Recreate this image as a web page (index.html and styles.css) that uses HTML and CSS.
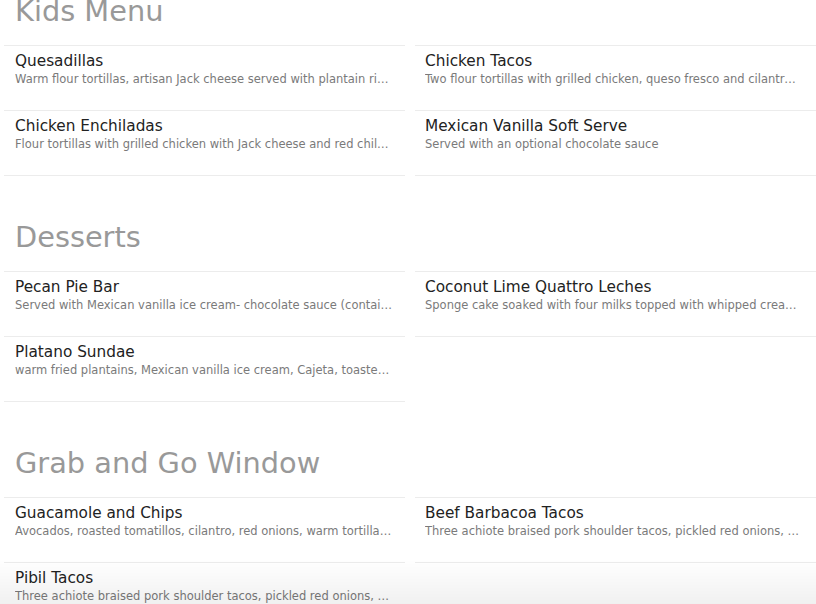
FILE: index.html
```html
<!DOCTYPE html>
<html>
<head>
<meta charset="utf-8">
<link rel="stylesheet" href="styles.css">
</head>
<body>
<div class="page">
  <section class="menu-section">
    <h2 class="section-title">Kids Menu</h2>
    <div class="items">
      <div class="item">
        <div class="item-name">Quesadillas</div>
        <div class="item-desc">Warm flour tortillas, artisan Jack cheese served with plantain rice and black beans</div>
      </div>
      <div class="item">
        <div class="item-name">Chicken Tacos</div>
        <div class="item-desc">Two flour tortillas with grilled chicken, queso fresco and cilantro, served with rice</div>
      </div>
      <div class="item">
        <div class="item-name">Chicken Enchiladas</div>
        <div class="item-desc">Flour tortillas with grilled chicken with Jack cheese and red chile sauce</div>
      </div>
      <div class="item">
        <div class="item-name">Mexican Vanilla Soft Serve</div>
        <div class="item-desc">Served with an optional chocolate sauce</div>
      </div>
    </div>
  </section>

  <section class="menu-section">
    <h2 class="section-title">Desserts</h2>
    <div class="items">
      <div class="item">
        <div class="item-name">Pecan Pie Bar</div>
        <div class="item-desc">Served with Mexican vanilla ice cream- chocolate sauce (contains nuts)</div>
      </div>
      <div class="item">
        <div class="item-name">Coconut Lime Quattro Leches</div>
        <div class="item-desc">Sponge cake soaked with four milks topped with whipped cream and toasted coconut</div>
      </div>
      <div class="item">
        <div class="item-name">Platano Sundae</div>
        <div class="item-desc">warm fried plantains, Mexican vanilla ice cream, Cajeta, toasted pecans</div>
      </div>
    </div>
  </section>

  <section class="menu-section">
    <h2 class="section-title">Grab and Go Window</h2>
    <div class="items">
      <div class="item">
        <div class="item-name">Guacamole and Chips</div>
        <div class="item-desc">Avocados, roasted tomatillos, cilantro, red onions, warm tortilla chips</div>
      </div>
      <div class="item">
        <div class="item-name">Beef Barbacoa Tacos</div>
        <div class="item-desc">Three achiote braised pork shoulder tacos, pickled red onions, cilantro</div>
      </div>
      <div class="item">
        <div class="item-name">Pibil Tacos</div>
        <div class="item-desc">Three achiote braised pork shoulder tacos, pickled red onions, cilantro</div>
      </div>
    </div>
  </section>
</div>
<div class="bottom-fade"></div>
</body>
</html>
```

FILE: styles.css
```css
html, body {
  margin: 0;
  padding: 0;
  background: #ffffff;
  overflow: hidden;
}

body {
  font-family: "DejaVu Sans", "Liberation Sans", sans-serif;
  width: 816px;
  height: 604px;
}

.page {
  margin-top: -50px;
  padding-left: 4px;
}

.menu-section {
  padding-top: 44px;
}

.section-title {
  margin: 0 0 16px 0;
  padding-left: 11px;
  font-size: 28.8px;
  line-height: 35px;
  font-weight: normal;
  color: #999999;
}

.items {
  display: grid;
  grid-template-columns: 401px 401px;
  column-gap: 10px;
}

.item {
  padding: 6px 13px 0 11px;
  box-sizing: border-box;
  border-bottom: 1px solid #ececec;
  height: 65px;
}

.item:nth-child(-n+2) {
  border-top: 1px solid #ececec;
  height: 66px;
}

.item:nth-child(even) {
  padding-left: 10px;
  padding-right: 14px;
}

.item-name {
  font-size: 15.3px;
  line-height: 19px;
  color: #222222;
  white-space: nowrap;
  overflow: hidden;
  text-overflow: ellipsis;
}

.item-desc {
  font-size: 11.5px;
  line-height: 16px;
  color: #7a7a7a;
  white-space: nowrap;
  overflow: hidden;
  text-overflow: ellipsis;
}

.bottom-fade {
  position: fixed;
  left: 0;
  right: 0;
  bottom: 0;
  height: 44px;
  background: linear-gradient(to bottom, rgba(0,0,0,0), rgba(0,0,0,0.06));
  pointer-events: none;
}
```
